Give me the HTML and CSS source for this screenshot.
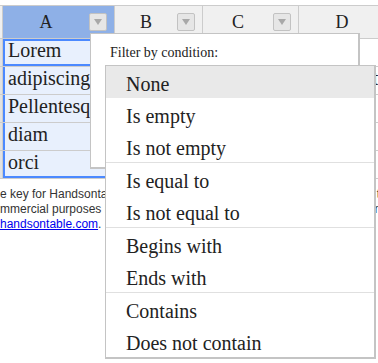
FILE: index.html
```html
<!DOCTYPE html>
<html lang="en">
<head>
    <meta charset="UTF-8">
    <meta name="viewport" content="width=device-width, initial-scale=1.0">
    <title>Filter by condition</title>
    <link rel="stylesheet" href="styles.css">
</head>
<body>

<div class="sheet">
  <div class="grid">
    <!-- headers -->
    <div class="cell corner"></div>
    <div class="cell head active"><span>A</span><button class="drop"></button></div>
    <div class="cell head"><span>B</span><button class="drop"></button></div>
    <div class="cell head"><span>C</span><button class="drop"></button></div>
    <div class="cell head"><span>D</span><button class="drop"></button></div>

    <!-- rows -->
    <div class="cell rowhead">1</div>
    <div class="cell sel current">Lorem</div>
    <div class="cell">ipsum</div>
    <div class="cell">dolor</div>
    <div class="cell">sit</div>

    <div class="cell rowhead">2</div>
    <div class="cell sel">adipiscing</div>
    <div class="cell">elit</div>
    <div class="cell">sed</div>
    <div class="cell">consectetur</div>

    <div class="cell rowhead">3</div>
    <div class="cell sel">Pellentesque</div>
    <div class="cell">vitae</div>
    <div class="cell">nisl</div>
    <div class="cell"></div>

    <div class="cell rowhead">4</div>
    <div class="cell sel">diam</div>
    <div class="cell">quis</div>
    <div class="cell">nunc</div>
    <div class="cell"></div>

    <div class="cell rowhead">5</div>
    <div class="cell sel last">orci</div>
    <div class="cell">eget</div>
    <div class="cell">magna</div>
    <div class="cell"></div>
  </div>

  <p class="notice">
    <span>e key for Handsontable is missing. Use your purchased key to activate the product.</span>
    <span>mmercial purposes by passing the key: 'non-commercial-and-evaluation'.</span>
    <span><a href="#">handsontable.com</a>.</span>
  </p>

  <!-- dropdown du filtre -->
  <div class="filter-box">
    <p>Filter by condition:</p>
  </div>

  <ul class="cond-menu">
    <li class="hover">None</li>
    <li>Is empty</li>
    <li>Is not empty</li>
    <li class="sep"></li>
    <li>Is equal to</li>
    <li>Is not equal to</li>
    <li class="sep"></li>
    <li>Begins with</li>
    <li>Ends with</li>
    <li class="sep"></li>
    <li>Contains</li>
    <li>Does not contain</li>
  </ul>
</div>

</body>
</html>
```

FILE: styles.css
```css
html {
    overflow: hidden;
}
body {
    margin: 0;
    min-height: 363px;
    font-family: "Liberation Serif", "Times New Roman", serif;
    color: #222;
    background: #fff;
}
.sheet {
    position: relative;
    padding-top: 5px;
}
.grid {
    display: grid;
    grid-template-columns: 50px 112px 88px 96px 112px;
    grid-template-rows: 33px repeat(5, 28px);
    margin-left: -47px;
    border-top: 1px solid #ccc;
    width: max-content;
}
.cell {
    box-sizing: border-box;
    border-right: 1px solid #ccc;
    border-bottom: 1px solid #ccc;
    font-size: 20px;
    line-height: 23px;
    padding: 0 5px;
    white-space: nowrap;
    overflow: hidden;
}
.corner, .rowhead {
    background: #f0f0f0;
    color: #f0f0f0;
}
.rowhead {
    background: #e2e2e2;
    color: #e2e2e2;
}
/* entetes de colonnes */
.head {
    display: flex;
    align-items: center;
    background: #f0f0f0;
    padding: 0 7px 0 0;
    font-size: 18px;
}
.head span {
    flex: 1;
    text-align: center;
}
.head.active {
    background: #8eb0e7;
}
.drop {
    width: 18px;
    height: 18px;
    padding: 0;
    border: 1px solid #c2c2c2;
    border-radius: 2px;
    background: #e6e6e6;
    display: flex;
    align-items: center;
    justify-content: center;
}
.drop::after {
    content: "";
    border-left: 4px solid transparent;
    border-right: 4px solid transparent;
    border-top: 6px solid #a8a8a8;
}
/* selection colonne A */
.sel {
    background: #e8f0fd;
    box-shadow: inset 2px 0 0 #4b89ff;
}
.sel.current {
    box-shadow: inset 0 0 0 2px #4b89ff;
}
.sel.last {
    box-shadow: inset 2px -2px 0 #4b89ff;
}
.notice {
    margin: 8px 0 0 0;
    font-family: "Liberation Sans", Arial, sans-serif;
    font-size: 12px;
    line-height: 15px;
    color: #333;
    white-space: nowrap;
}
.notice span {
    display: block;
}
.notice a {
    color: #0000ee;
}
/* menus deroulants */
.filter-box {
    position: absolute;
    left: 90px;
    top: 33px;
    width: 270px;
    height: 136px;
    box-sizing: border-box;
    background: #fff;
    border: 1px solid #c4c4c4;
    border-width: 1px 2px 2px 1px;
}
.filter-box p {
    margin: 0;
    padding: 10px 0 0 19px;
    font-size: 14px;
    line-height: 17px;
}
.cond-menu {
    position: absolute;
    left: 105px;
    top: 65px;
    width: 271px;
    box-sizing: border-box;
    margin: 0;
    padding: 0;
    list-style: none;
    background: #fff;
    border: 1px solid #c4c4c4;
    border-width: 1px 2px 2px 1px;
}
.cond-menu li {
    box-sizing: border-box;
    height: 32px;
    padding: 4px 0 0 20px;
    font-size: 20px;
    line-height: 28px;
    color: #222;
}
.cond-menu li.hover {
    background: #e9e9e9;
}
.cond-menu li.sep {
    height: 1px;
    padding: 0;
    background: #e0e0e0;
}
```
